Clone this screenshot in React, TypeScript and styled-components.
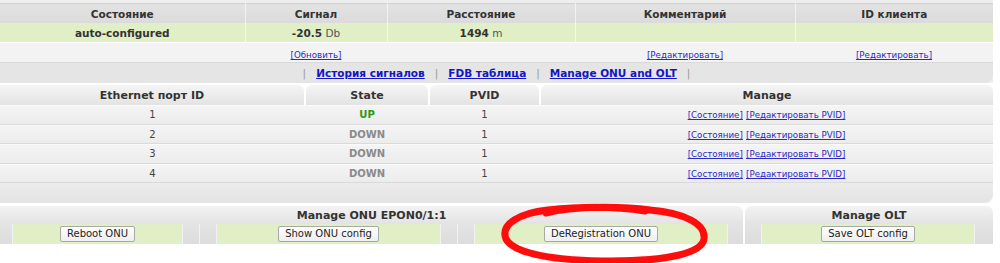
import React from 'react';
import styled, { createGlobalStyle } from 'styled-components';

// --- Global ---
const GlobalStyle = createGlobalStyle`
  html, body {
    margin: 0;
    padding: 0;
    background: #ffffff;
  }
  body {
    font-family: "DejaVu Sans", Verdana, sans-serif;
    color: #333333;
  }
`;

const Page = styled.div`
  position: relative;
  width: 993px;
  height: 263px;
  overflow: hidden;
`;

// --- ONU info table ---
const InfoPanel = styled.div`
  padding-top: 3px;
  background: #eeeeee;
`;

const InfoTable = styled.table`
  width: 100%;
  border-collapse: collapse;
  table-layout: fixed;
  border-top: 1px solid #d2d2d2;
`;

const InfoHead = styled.th`
  height: 19px;
  padding: 0;
  font-size: 10.5px;
  font-weight: bold;
  color: #333;
  background: linear-gradient(#e3e3e3, #dadada);
  border-right: 1px solid #f2f2f2;
  &:last-child { border-right: none; }
`;

const InfoCell = styled.td`
  height: 19px;
  padding: 0;
  text-align: center;
  font-size: 10.5px;
  color: #333;
  background: #e0efc5;
  border-right: 1px solid #f3f8e8;
  border-bottom: 1px solid #ffffff;
  &:last-child { border-right: none; }

  b { font-weight: bold; }
  span { color: #555; }
`;

const ActionCell = styled.td`
  height: 19px;
  padding: 0;
  text-align: center;
  background: #f3f3f3;
  border-bottom: 1px solid #d9d9d9;
`;

const SmallLink = styled.a`
  font-size: 8.7px;
  color: #2a2ac8;
  text-decoration: underline;
  cursor: pointer;
`;

const NavBar = styled.div`
  height: 20px;
  display: flex;
  align-items: center;
  justify-content: center;
  background: #e5e5e5;
  border-bottom-right-radius: 8px;
  font-size: 10.5px;
`;

const NavSep = styled.span`
  color: #999;
  padding: 0 10px;
`;

const NavLink = styled.a`
  font-weight: bold;
  color: #1414c8;
  text-decoration: underline;
  cursor: pointer;
`;

// --- Ethernet ports table ---
const PortsTable = styled.table`
  width: 100%;
  margin-top: 2px;
  border-collapse: separate;
  border-spacing: 0;
  table-layout: fixed;
`;

const PortHead = styled.th`
  height: 20px;
  padding: 0;
  font-size: 11px;
  font-weight: bold;
  color: #333;
  background: linear-gradient(#f5f5f5, #e3e3e3);
  background-clip: padding-box;
  border-left: 1px solid #fff;
  border-right: 1px solid #fff;
  border-radius: 6px 6px 0 0;
  &:first-child { border-left: none; border-top-left-radius: 0; }
  &:last-child { border-right: none; }
`;

const PortCell = styled.td<{ $tone?: 'up' | 'down' }>`
  height: 19.5px;
  box-sizing: border-box;
  padding: 0;
  text-align: center;
  font-size: 10px;
  font-weight: ${p => (p.$tone ? 'bold' : 'normal')};
  color: ${p => (p.$tone === 'up' ? '#2b9a16' : p.$tone === 'down' ? '#8a8a8a' : '#444')};
  background: linear-gradient(#f4f4f4, #ececec);
  border-top: 1px solid #fafafa;
  border-bottom: 1px solid #dadada;
`;

const PortFooter = styled.td`
  height: 20px;
  padding: 0;
  background: linear-gradient(#ececec, #e4e4e4);
  border-bottom-right-radius: 8px;
`;

// --- Manage panels ---
const ManageRow = styled.div`
  display: flex;
  gap: 2px;
  margin-top: 3px;
`;

const ManagePanel = styled.div<{ $width?: number; $left?: boolean }>`
  ${p => (p.$width ? `width: ${p.$width}px;` : 'flex: 1;')}
  display: flex;
  flex-direction: column;
  background: ${p => (p.$left ? 'linear-gradient(#e8e8e8, #e2e2e2)' : 'linear-gradient(#f4f4f4, #fdfdfd)')};
  border-radius: ${p => (p.$left ? '0 7px 0 0' : '7px 7px 0 0')};
  overflow: hidden;
`;

const ManageTitle = styled.div`
  height: 18px;
  line-height: 19px;
  text-align: center;
  font-size: 11px;
  font-weight: bold;
  color: #333;
  background: linear-gradient(#f3f3f3, #e3e3e3);
`;

const ButtonStrip = styled.div`
  display: flex;
  gap: 1px;
  height: 20px;
  background: #f2f2f2;
  border-bottom: 1px solid #ffffff;
`;

const Group = styled.div<{ $width?: number }>`
  ${p => (p.$width ? `width: ${p.$width}px;` : 'flex: 1;')}
  display: flex;
  gap: 1px;
`;

const Spacer = styled.div<{ $width: number }>`
  width: ${p => p.$width}px;
  background: linear-gradient(#e4e4e4, #dcdcdc);
`;

const GreenCell = styled.div`
  flex: 1;
  display: flex;
  align-items: center;
  justify-content: center;
  background: #e0efc5;
`;

const Button = styled.button`
  height: 16px;
  padding: 0 6px;
  font-family: "DejaVu Sans", Verdana, sans-serif;
  font-size: 10px;
  line-height: 14px;
  color: #222;
  background: linear-gradient(#ffffff, #eeeeee);
  border: 1px solid #a9a9a9;
  border-radius: 2px;
  cursor: pointer;
`;

const ManageBottom = styled.div`
  flex: 1;
  height: 20px;
`;

// --- Hand-drawn marker over the page ---
const Marker = styled.svg`
  position: absolute;
  left: 0;
  top: 0;
  pointer-events: none;
`;

// --- Data ---
const ports = [
  { id: 1, state: 'UP', pvid: 1 },
  { id: 2, state: 'DOWN', pvid: 1 },
  { id: 3, state: 'DOWN', pvid: 1 },
  { id: 4, state: 'DOWN', pvid: 1 },
];

interface ButtonGroupProps {
  label: string;
  lead: number;
  trail: number;
  width?: number;
}

const ButtonGroup: React.FC<ButtonGroupProps> = ({ label, lead, trail, width }) => (
  <Group $width={width}>
    <Spacer $width={lead} />
    <GreenCell>
      <Button>{label}</Button>
    </GreenCell>
    <Spacer $width={trail} />
  </Group>
);

export default function App() {
  return (
    <Page>
      <GlobalStyle />

      <InfoPanel>
        <InfoTable>
          <colgroup>
            <col style={{ width: 245 }} />
            <col style={{ width: 142 }} />
            <col style={{ width: 188 }} />
            <col style={{ width: 220 }} />
            <col />
          </colgroup>
          <thead>
            <tr>
              <InfoHead>Состояние</InfoHead>
              <InfoHead>Сигнал</InfoHead>
              <InfoHead>Расстояние</InfoHead>
              <InfoHead>Комментарий</InfoHead>
              <InfoHead>ID клиента</InfoHead>
            </tr>
          </thead>
          <tbody>
            <tr>
              <InfoCell><b>auto-configured</b></InfoCell>
              <InfoCell><b>-20.5</b> <span>Db</span></InfoCell>
              <InfoCell><b>1494</b> <span>m</span></InfoCell>
              <InfoCell />
              <InfoCell />
            </tr>
            <tr>
              <ActionCell />
              <ActionCell><SmallLink>[Обновить]</SmallLink></ActionCell>
              <ActionCell />
              <ActionCell><SmallLink>[Редактировать]</SmallLink></ActionCell>
              <ActionCell><SmallLink>[Редактировать]</SmallLink></ActionCell>
            </tr>
          </tbody>
        </InfoTable>
        <NavBar>
          <NavSep>|</NavSep>
          <NavLink>История сигналов</NavLink>
          <NavSep>|</NavSep>
          <NavLink>FDB таблица</NavLink>
          <NavSep>|</NavSep>
          <NavLink>Manage ONU and OLT</NavLink>
          <NavSep>|</NavSep>
        </NavBar>
      </InfoPanel>

      <PortsTable>
        <colgroup>
          <col style={{ width: 305 }} />
          <col style={{ width: 124 }} />
          <col style={{ width: 111 }} />
          <col />
        </colgroup>
        <thead>
          <tr>
            <PortHead>Ethernet порт ID</PortHead>
            <PortHead>State</PortHead>
            <PortHead>PVID</PortHead>
            <PortHead>Manage</PortHead>
          </tr>
        </thead>
        <tbody>
          {ports.map(port => (
            <tr key={port.id}>
              <PortCell>{port.id}</PortCell>
              <PortCell $tone={port.state === 'UP' ? 'up' : 'down'}>{port.state}</PortCell>
              <PortCell>{port.pvid}</PortCell>
              <PortCell>
                <SmallLink>[Состояние]</SmallLink>{' '}
                <SmallLink>[Редактировать PVID]</SmallLink>
              </PortCell>
            </tr>
          ))}
          <tr>
            <PortFooter colSpan={4} />
          </tr>
        </tbody>
      </PortsTable>

      <ManageRow>
        <ManagePanel $width={743} $left>
          <ManageTitle>Manage ONU EPON0/1:1</ManageTitle>
          <ButtonStrip>
            <ButtonGroup width={199} lead={12} trail={16} label="Reboot ONU" />
            <ButtonGroup width={257} lead={16} trail={16} label="Show ONU config" />
            <ButtonGroup lead={16} trail={15} label="DeRegistration ONU" />
          </ButtonStrip>
          <ManageBottom />
        </ManagePanel>
        <ManagePanel>
          <ManageTitle>Manage OLT</ManageTitle>
          <ButtonStrip>
            <ButtonGroup lead={16} trail={18} label="Save OLT config" />
          </ButtonStrip>
          <ManageBottom />
        </ManagePanel>
      </ManageRow>

      <Marker width={993} height={263} viewBox="0 0 993 263">
        <defs>
          <filter id="soft" x="-10%" y="-10%" width="120%" height="120%">
            <feGaussianBlur stdDeviation="0.7" />
          </filter>
        </defs>
        <path
          d="M 546 213 C 575 206, 620 206, 650 210 C 685 213, 706 224, 704 239 C 702 253, 668 261, 612 261 C 556 261, 514 254, 506 239 C 500 224, 520 213, 548 210 C 585 206, 620 207, 645 211"
          fill="none"
          stroke="#ff0a0a"
          strokeWidth={7}
          strokeLinecap="round"
          strokeLinejoin="round"
          filter="url(#soft)"
        />
      </Marker>
    </Page>
  );
}
